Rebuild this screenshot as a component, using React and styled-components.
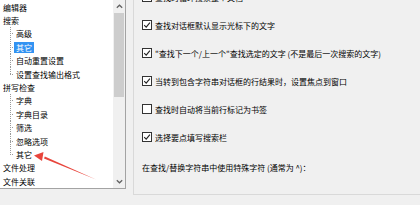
import React from 'react';
import styled, { createGlobalStyle } from 'styled-components';

const GlobalStyle = createGlobalStyle`
  html, body {
    margin: 0;
    padding: 0;
    background: #f0f0f0;
    overflow: hidden;
  }
  body {
    font-family: "Noto Sans CJK SC", "Noto Sans", sans-serif;
    font-size: 8px;
    color: #000;
  }
`;

const Page = styled.div`
  display: flex;
  width: 420px;
  height: 205px;
  position: relative;
  overflow: hidden;
`;

const TreePanel = styled.div`
  display: flex;
  flex-shrink: 0;
  width: 126px;
  height: 189px;
  box-sizing: border-box;
  background: #fff;
  border-right: 1px solid #a3a3a3;
  border-bottom: 1px solid #a3a3a3;
`;

const Tree = styled.div`
  flex: 1;
  padding-top: 0.5px;
  display: flex;
  flex-direction: column;
`;

const Node = styled.div`
  display: flex;
  align-items: center;
  height: 13.55px;
  padding-left: ${p => (p.$child ? '10px' : '1px')};
  white-space: nowrap;
`;

const Guide = styled.span`
  align-self: stretch;
  width: 4px;
  flex-shrink: 0;
  background:
    repeating-linear-gradient(to right, #9a9a9a 0 1px, transparent 1px 2px) 0 50% / 4px 1px no-repeat,
    repeating-linear-gradient(to bottom, #9a9a9a 0 1px, transparent 1px 2px) 0 0 / 1px ${p => (p.$last ? '50%' : '100%')} no-repeat;
`;

const Label = styled.span`
  padding: 0 2px;
  line-height: 11px;
  background: ${p => (p.$selected ? '#3393f2' : 'transparent')};
  color: ${p => (p.$selected ? '#fff' : '#000')};
`;

const ScrollBar = styled.div`
  width: 12px;
  display: flex;
  flex-direction: column;
  background: #f0f0f0;
`;

const ScrollArrow = styled.div`
  height: 13px;
  display: flex;
  align-items: center;
  justify-content: center;
`;

const Thumb = styled.div`
  height: 84px;
  margin: 0 1px;
  background: #cdcdcd;
`;

const Track = styled.div`
  flex: 1;
`;

const Options = styled.div`
  flex: 1;
  padding-left: 7px;
`;

const GroupBox = styled.div`
  margin-top: -17px;
  padding: 0 0 13px 8px;
  border-left: 1px solid #d9d9d9;
  border-bottom: 1px solid #d9d9d9;
  display: flex;
  flex-direction: column;
`;

const CheckRow = styled.div`
  display: flex;
  align-items: center;
  gap: 3px;
  height: 28px;
  white-space: nowrap;
`;

const Box = styled.span`
  width: 10px;
  height: 10px;
  box-sizing: border-box;
  border: 1px solid #333;
  background: #fff;
  flex-shrink: 0;
  display: flex;
  align-items: center;
  justify-content: center;
`;

const Note = styled.div`
  display: flex;
  align-items: center;
  height: 28px;
  margin-top: 2px;
  white-space: nowrap;
`;

const Annotation = styled.svg`
  position: absolute;
  left: 0;
  top: 0;
  pointer-events: none;
`;

const Chevron = ({ down }) => (
  <svg width="7" height="5" viewBox="0 0 7 5">
    <path
      d={down ? 'M0.8 1.2 L3.5 3.8 L6.2 1.2' : 'M0.8 3.8 L3.5 1.2 L6.2 3.8'}
      fill="none"
      stroke="#606060"
      strokeWidth="1.2"
    />
  </svg>
);

const Check = ({ checked }) => (
  <Box>
    {checked && (
      <svg width="8" height="8" viewBox="0 0 8 8">
        <path d="M1.2 4.2 L3.2 6.2 L6.9 1.6" fill="none" stroke="#222" strokeWidth="1.1" />
      </svg>
    )}
  </Box>
);

const tree = [
  { text: '编辑器' },
  { text: '搜索' },
  { text: '高级', child: true },
  { text: '其它', child: true, selected: true },
  { text: '自动重置设置', child: true },
  { text: '设置查找输出格式', child: true, last: true },
  { text: '拼写检查' },
  { text: '字典', child: true },
  { text: '字典目录', child: true },
  { text: '筛选', child: true },
  { text: '忽略选项', child: true },
  { text: '其它', child: true, last: true },
  { text: '文件处理' },
  { text: '文件关联' },
];

const options = [
  { text: '查找时循环搜索整个文档', checked: true },
  { text: '查找对话框默认显示光标下的文字', checked: true },
  { text: '"查找下一个/上一个"查找选定的文字 (不是最后一次搜索的文字)', checked: true },
  { text: '当转到包含字符串对话框的行结果时，设置焦点到窗口', checked: true },
  { text: '查找时自动将当前行标记为书签', checked: false },
  { text: '选择要点填写搜索栏', checked: true },
];

export default function App() {
  return (
    <>
      <GlobalStyle />
      <Page>
        <TreePanel>
          <Tree>
            {tree.map((n, i) => (
              <Node key={i} $child={n.child}>
                {n.child && <Guide $last={n.last} />}
                <Label $selected={n.selected}>{n.text}</Label>
              </Node>
            ))}
          </Tree>
          <ScrollBar>
            <ScrollArrow><Chevron /></ScrollArrow>
            <Thumb />
            <Track />
            <ScrollArrow><Chevron down /></ScrollArrow>
          </ScrollBar>
        </TreePanel>
        <Options>
          <GroupBox>
            {options.map((o, i) => (
              <CheckRow key={i}>
                <Check checked={o.checked} />
                <span>{o.text}</span>
              </CheckRow>
            ))}
            <Note>在查找/替换字符串中使用特殊字符 (通常为 ^)：</Note>
          </GroupBox>
        </Options>
        <Annotation width="420" height="205">
          <path d="M96 179.5 L44 158.6 L44.8 156.4 Z" fill="#e8453c" />
          <path d="M34 155.5 L43.5 152 L42 161 Z" fill="#e8453c" />
        </Annotation>
      </Page>
    </>
  );
}
